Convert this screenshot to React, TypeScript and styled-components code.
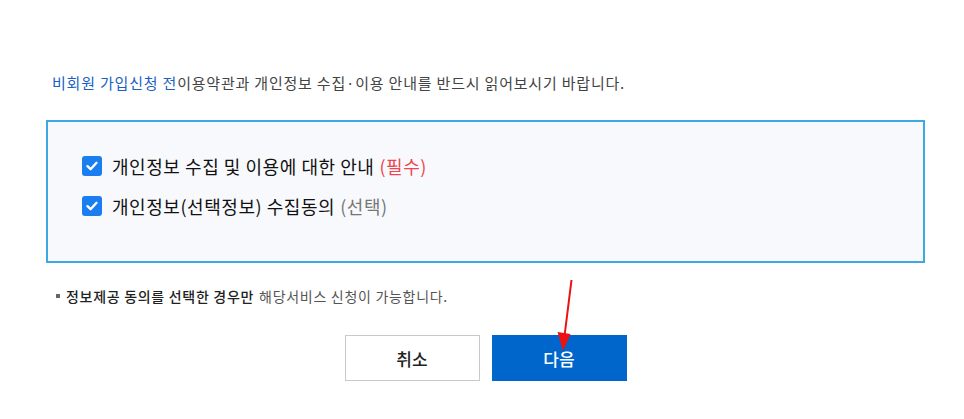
import React from 'react';
import styled, { createGlobalStyle } from 'styled-components';

const GlobalStyle = createGlobalStyle`
  html, body {
    margin: 0;
    padding: 0;
    background: #ffffff;
  }
  body {
    font-family: "Noto Sans CJK KR", "Noto Sans", sans-serif;
    color: #222;
  }
`;

const Page = styled.div`
  position: relative;
  width: 964px;
  height: 419px;
  box-sizing: border-box;
  padding: 73px 39px 0 46px;
`;

const Intro = styled.p`
  margin: 0 0 0 6px;
  font-size: 15px;
  line-height: 20px;
  color: #444;
  letter-spacing: 0.8px;
`;

const Highlight = styled.span`
  color: #1a5fc4;
`;

const AgreeBox = styled.div`
  margin-top: 27px;
  height: 143px;
  box-sizing: border-box;
  border: 2px solid #3fa7e1;
  background: #f8f9fd;
  padding: 32px 34px 0;
  display: flex;
  flex-direction: column;
  gap: 16px;
`;

const Row = styled.label`
  display: flex;
  align-items: center;
  gap: 10px;
  height: 24px;
  font-size: 18px;
  color: #111;
  letter-spacing: 0.55px;
`;

const Check = styled.span`
  width: 20px;
  height: 20px;
  border-radius: 3px;
  background: #1a7ef0;
  display: flex;
  align-items: center;
  justify-content: center;
  flex-shrink: 0;
`;

const Tag = styled.span<{ $tone: 'required' | 'optional' }>`
  margin-left: 5px;
  color: ${({ $tone }) => ($tone === 'required' ? '#f0454f' : '#777')};
`;

const Note = styled.p`
  margin: 24px 0 0 10px;
  display: flex;
  align-items: center;
  font-size: 14px;
  line-height: 18px;
  color: #555;
  letter-spacing: 0.7px;
`;

const Bullet = styled.span`
  width: 4px;
  height: 4px;
  background: #666;
  margin-right: 6px;
`;

const Strong = styled.span`
  color: #222;
  font-weight: 500;
  margin-right: 5px;
`;

const Buttons = styled.div`
  margin-top: 30px;
  display: flex;
  justify-content: center;
  gap: 12px;
`;

const Button = styled.button<{ $primary?: boolean }>`
  width: 135px;
  height: 46px;
  box-sizing: border-box;
  border: 1px solid ${({ $primary }) => ($primary ? '#0066cc' : '#c9c9c9')};
  background: ${({ $primary }) => ($primary ? '#0066cc' : '#fff')};
  color: ${({ $primary }) => ($primary ? '#fff' : '#222')};
  font-family: inherit;
  font-size: 17px;
  font-weight: 500;
  cursor: pointer;
`;

const Arrow = styled.svg`
  position: absolute;
  left: 550px;
  top: 276px;
  pointer-events: none;
`;

const CheckMark = () => (
  <svg width="14" height="14" viewBox="0 0 14 14">
    <path d="M2.5 7.2 L5.6 10.2 L11.5 3.8" fill="none" stroke="#fff" strokeWidth="2.4" strokeLinecap="round" strokeLinejoin="round" />
  </svg>
);

export default function App() {
  return (
    <>
      <GlobalStyle />
      <Page>
        <Intro>
          <Highlight>비회원 가입신청 전</Highlight>이용약관과 개인정보 수집·이용 안내를 반드시 읽어보시기 바랍니다.
        </Intro>
        <AgreeBox>
          <Row>
            <Check><CheckMark /></Check>
            <span>
              개인정보 수집 및 이용에 대한 안내<Tag $tone="required">(필수)</Tag>
            </span>
          </Row>
          <Row>
            <Check><CheckMark /></Check>
            <span>
              개인정보(선택정보) 수집동의<Tag $tone="optional">(선택)</Tag>
            </span>
          </Row>
        </AgreeBox>
        <Note>
          <Bullet />
          <Strong>정보제공 동의를 선택한 경우만</Strong>해당서비스 신청이 가능합니다.
        </Note>
        <Buttons>
          <Button>취소</Button>
          <Button $primary>다음</Button>
        </Buttons>
        <Arrow width="30" height="90" viewBox="0 0 30 90">
          <line x1="21.5" y1="4" x2="14.5" y2="60" stroke="#ee1111" strokeWidth="2" />
          <polygon points="7.5,56 20.5,58 13,75" fill="#ee1111" />
        </Arrow>
      </Page>
    </>
  );
}
